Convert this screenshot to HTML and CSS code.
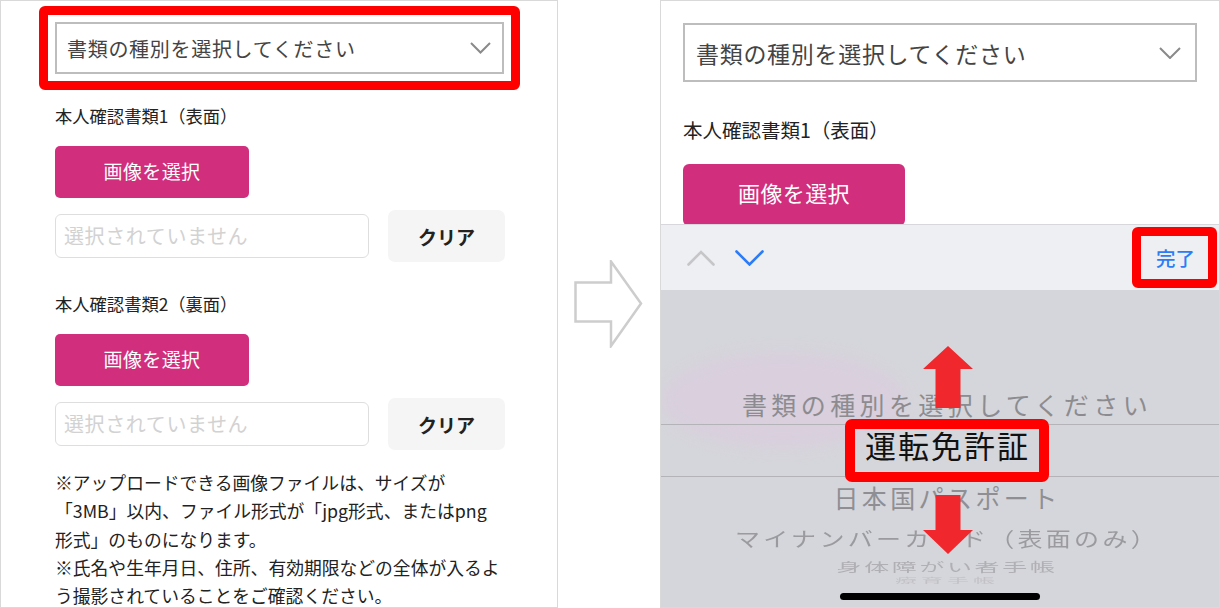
FILE: index.html
```html
<!DOCTYPE html>
<html lang="ja">
<head>
    <meta charset="UTF-8">
    <meta name="viewport" content="width=device-width, initial-scale=1.0">
    <title>本人確認書類の選択</title>
    <link rel="stylesheet" href="styles.css">
</head>
<body>
    <div class="screen">
        <!-- before: the upload form -->
        <div class="panel panel-left">
            <div class="mark mark-select">
                <div class="select">
                    <span>書類の種別を選択してください</span>
                    <svg class="chev" width="21" height="12" viewBox="0 0 21 12"><path d="M1 1l9.5 9.5L20 1"/></svg>
                </div>
            </div>
            <div class="form">
                <p class="label">本人確認書類1（表面）</p>
                <button class="pick-btn">画像を選択</button>
                <div class="file-row">
                    <div class="file-name">選択されていません</div>
                    <button class="clear-btn">クリア</button>
                </div>

                <p class="label label-gap">本人確認書類2（裏面）</p>
                <button class="pick-btn">画像を選択</button>
                <div class="file-row">
                    <div class="file-name">選択されていません</div>
                    <button class="clear-btn">クリア</button>
                </div>

                <p class="note">
                    <span>※アップロードできる画像ファイルは、サイズが</span>
                    <span>「3MB」以内、ファイル形式が「jpg形式、またはpng</span>
                    <span>形式」のものになります。</span>
                    <span>※氏名や生年月日、住所、有効期限などの全体が入るよ</span>
                    <span>う撮影されていることをご確認ください。</span>
                </p>
            </div>
        </div>

        <div class="next">
            <svg width="70" height="88" viewBox="0 0 70 88"><polygon points="1.5,22.5 37,22.5 37,1.5 67,43.5 37,86 37,61.5 1.5,61.5"/></svg>
        </div>

        <!-- after: the iOS picker -->
        <div class="panel panel-right">
            <div class="page">
                <div class="select select-lg">
                    <span>書類の種別を選択してください</span>
                    <svg class="chev" width="22" height="12" viewBox="0 0 22 12"><path d="M1 1l10 10L21 1"/></svg>
                </div>
                <p class="label label-lg">本人確認書類1（表面）</p>
                <button class="pick-btn pick-btn-lg">画像を選択</button>
            </div>

            <div class="toolbar">
                <svg class="nav-up" width="28" height="16" viewBox="0 0 28 16"><path d="M1.5 14.5L14 2l12.5 12.5"/></svg>
                <svg class="nav-down" width="29" height="16" viewBox="0 0 29 16"><path d="M1.5 1.5L14.5 14.5 27.5 1.5"/></svg>
                <div class="mark mark-done"><span>完了</span></div>
            </div>

            <div class="picker">
                <div class="blob"></div>
                <div class="wheel">
                    <div class="opt opt-1">書類の種別を選択してください</div>
                    <div class="opt opt-sel"><span class="mark mark-opt">運転免許証</span></div>
                    <div class="opt opt-2">日本国パスポート</div>
                    <div class="opt opt-3"><span>マイナンバーカード（表面のみ）</span></div>
                    <div class="opt opt-4"><span>身体障がい者手帳</span></div>
                    <div class="opt opt-5"><span>療育手帳</span></div>
                </div>
                <svg class="arrow arrow-up" width="50" height="62" viewBox="0 0 50 62"><polygon points="25,0 50,23 37.5,23 37.5,62 12.5,62 12.5,23 0,23"/></svg>
                <svg class="arrow arrow-down" width="50" height="59" viewBox="0 0 50 59"><polygon points="12.5,0 37.5,0 37.5,35 50,35 25,59 0,35 12.5,35"/></svg>
                <div class="home-bar"></div>
            </div>
        </div>
    </div>
</body>
</html>
```

FILE: styles.css
```css
* {
    box-sizing: border-box;
}
body {
    margin: 0;
    background: #fff;
    font-family: "Noto Sans CJK JP", "Noto Sans", sans-serif;
    color: #222;
}
p {
    margin: 0;
}
button {
    font-family: inherit;
    border: none;
    padding: 0;
    cursor: pointer;
}
.screen {
    display: flex;
    width: 1220px;
    height: 608px;
}
.panel {
    height: 608px;
    border: 1px solid #d9d9d9;
    overflow: hidden;
}
.panel-left {
    width: 558px;
    padding: 5px 0 0 38px;
    overflow: visible;
}
.panel-right {
    flex: 1;
    display: flex;
    flex-direction: column;
}

/* red annotation boxes */
.mark {
    border: 9px solid #ff0000;
    border-radius: 6px;
}
.mark-select {
    width: 481px;
    padding: 7px;
}

.select {
    display: flex;
    align-items: center;
    justify-content: space-between;
    height: 52px;
    padding: 0 11px 0 10px;
    border: 2px solid #bdbdbd;
    font-size: 20px;
    letter-spacing: 0.7px;
    color: #444;
}
.chev path {
    fill: none;
    stroke: #8a8a8a;
    stroke-width: 2;
}
.select-lg {
    width: 514px;
    height: 59px;
    padding: 0 14px 0 11px;
    font-size: 23px;
}

.form {
    padding-left: 16px;
    width: 466px;
}
.label {
    margin-top: 14px;
    font-size: 17.3px;
    line-height: 24px;
}
.label-gap {
    margin-top: 30px;
}
.pick-btn {
    display: block;
    width: 194px;
    height: 52px;
    margin-top: 18px;
    padding-bottom: 3px;
    border-radius: 5px;
    background: #d12e7e;
    color: #fff;
    font-size: 19px;
    letter-spacing: 0.4px;
}
.file-row {
    display: flex;
    align-items: center;
    height: 52px;
    margin-top: 12px;
}
.file-name {
    width: 314px;
    height: 44px;
    padding: 0 0 2px 8px;
    display: flex;
    align-items: center;
    border: 1.5px solid #dedede;
    border-radius: 6px;
    font-size: 20px;
    letter-spacing: 0.6px;
    color: #d2d2d2;
}
.clear-btn {
    width: 117px;
    height: 52px;
    margin-left: 19px;
    border-radius: 7px;
    background: #f5f5f5;
    font-size: 19px;
    font-weight: 700;
    color: #222;
}
.note {
    margin-top: 18px;
    font-size: 17.8px;
    white-space: nowrap;
}
.note span {
    display: block;
    line-height: 28.4px;
}
.note span:last-child {
    line-height: 20px;
    margin-top: 3px;
}

.next {
    width: 102px;
    display: flex;
    align-items: center;
    justify-content: center;
}
.next polygon {
    fill: none;
    stroke: #cdcdcd;
    stroke-width: 2.5;
}

/* right: phone screen */
.page {
    height: 223px;
    flex-shrink: 0;
    padding: 22px 0 0 22px;
    overflow: hidden;
}
.label-lg {
    margin-top: 35px;
    font-size: 19.5px;
    line-height: 26px;
}
.pick-btn-lg {
    width: 222px;
    height: 62px;
    margin-top: 21px;
    padding-bottom: 6px;
    border-radius: 6px;
    font-size: 22px;
}

.toolbar {
    height: 66px;
    flex-shrink: 0;
    display: flex;
    align-items: center;
    padding: 0 2px 0 26px;
    background: #eeeff3;
    border-top: 1px solid #d8d8dc;
}
.toolbar path {
    fill: none;
    stroke-width: 2.6;
    stroke-linecap: round;
}
.nav-up path {
    stroke: #c6c6c9;
}
.nav-down {
    margin-left: 20px;
}
.nav-down path {
    stroke: #2d7cf5;
}
.mark-done {
    margin-left: auto;
    width: 85px;
    height: 61px;
    display: flex;
    align-items: center;
    justify-content: center;
    font-size: 19.5px;
    font-weight: 500;
    color: #2d7cf5;
    padding-left: 2px;
}

.picker {
    flex: 1;
    position: relative;
    display: flex;
    flex-direction: column;
    background: #d5d6db;
    overflow: hidden;
}
.blob {
    position: absolute;
    left: 0;
    top: 62px;
    width: 245px;
    height: 96px;
    border-radius: 50%;
    background: rgba(226, 196, 226, 0.35);
    filter: blur(8px);
}
.wheel {
    position: relative;
    padding-top: 94px;
}
.opt {
    display: flex;
    align-items: center;
    justify-content: center;
    padding-left: 14px;
    white-space: nowrap;
    font-size: 25px;
    line-height: 1;
}
.opt span {
    display: inline-block;
}
.opt-1 {
    height: 40px;
    letter-spacing: 4.4px;
    color: #8c8c90;
}
.opt-sel {
    height: 53px;
    border-top: 1px solid #b3b3b8;
    border-bottom: 1px solid #b3b3b8;
}
.mark-opt {
    height: 63px;
    display: flex;
    align-items: center;
    padding: 0 9px 2px 10px;
    border-width: 10px;
    border-radius: 7px;
    font-size: 31px;
    letter-spacing: 2px;
    color: #111;
}
.opt-2 {
    height: 41px;
    letter-spacing: 3.4px;
    color: #8f8f93;
}
.opt-3 {
    height: 40px;
    letter-spacing: 3.3px;
    color: #9b9b9f;
}
.opt-3 span {
    transform: scaleY(0.8);
}
.opt-4 {
    height: 17px;
    letter-spacing: 2.6px;
    color: #b0b0b4;
}
.opt-4 span {
    transform: scaleY(0.5);
}
.opt-5 {
    height: 9px;
    overflow: hidden;
    align-items: flex-start;
    padding-top: 2px;
    font-size: 22px;
    letter-spacing: 4px;
    color: #c2c2c6;
}
.opt-5 span {
    transform: scaleY(0.3);
    transform-origin: center top;
}

.arrow {
    position: absolute;
    left: 262px;
}
.arrow polygon {
    fill: #f0282d;
}
.arrow-up {
    top: 56px;
}
.arrow-down {
    top: 205px;
}
.home-bar {
    width: 200px;
    height: 7px;
    margin: auto auto 7px;
    border-radius: 4px;
    background: #000;
}
```
